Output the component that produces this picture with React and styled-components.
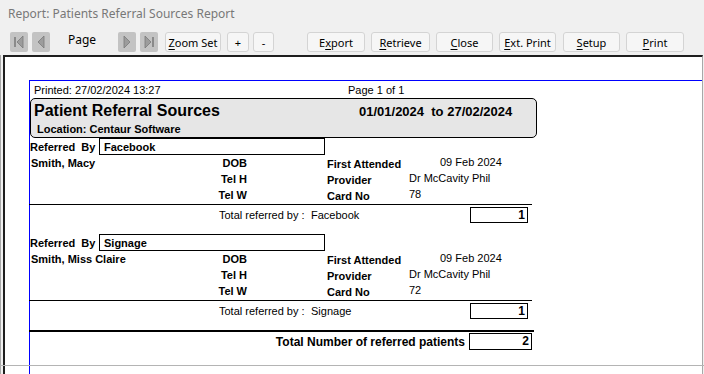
import React from 'react';
import styled, { createGlobalStyle } from 'styled-components';

const GlobalStyle = createGlobalStyle`
	html, body {
		margin: 0;
		padding: 0;
		background: #f0f0f0;
		overflow: hidden;
	}
`

const groups = [
	{
		source: 'Facebook',
		name: 'Smith, Macy',
		attended: '09 Feb 2024',
		provider: 'Dr McCavity Phil',
		card: '78',
		total: 1,
	},
	{
		source: 'Signage',
		name: 'Smith, Miss Claire',
		attended: '09 Feb 2024',
		provider: 'Dr McCavity Phil',
		card: '72',
		total: 1,
	},
]

const NavIcon = ({ dir, end }) => {
	const left = dir === 'left'
	return (
		<svg width="18" height="20" viewBox="0 0 18 20">
			<rect x="0" y="0" width="18" height="20" rx="2" fill="#c3c3c3" />
			{left ? (
				<>
					{end && <rect x="4" y="5" width="2" height="10" fill="#8a8a8a" />}
					<polygon points={end ? '13,4 7,10 13,16' : '12,4 6,10 12,16'} fill="#9c9c9c" stroke="#7a7a7a" strokeWidth="0.8" />
				</>
			) : (
				<>
					<polygon points={end ? '5,4 11,10 5,16' : '6,4 12,10 6,16'} fill="#9c9c9c" stroke="#7a7a7a" strokeWidth="0.8" />
					{end && <rect x="12" y="5" width="2" height="10" fill="#8a8a8a" />}
				</>
			)}
		</svg>
	)
}

const App = () => {
	return (
		<Window>
			<GlobalStyle />
			<TitleBar>Report: Patients Referral Sources Report</TitleBar>
			<Toolbar>
				<NavButton $ml={0}><NavIcon dir="left" end /></NavButton>
				<NavButton $ml={4}><NavIcon dir="left" /></NavButton>
				<PageLabel>Page</PageLabel>
				<NavButton $ml={0}><NavIcon dir="right" /></NavButton>
				<NavButton $ml={4}><NavIcon dir="right" end /></NavButton>
				<Button $ml={7} $w={56}><u>Z</u>oom Set</Button>
				<Button $ml={6} $w={22}>+</Button>
				<Button $ml={4} $w={21}>-</Button>
				<Button $ml={33} $w={58}>E<u>x</u>port</Button>
				<Button $ml={6} $w={59}><u>R</u>etrieve</Button>
				<Button $ml={6} $w={57}><u>C</u>lose</Button>
				<Button $ml={6} $w={57}><u>E</u>xt. Print</Button>
				<Button $ml={7} $w={57}><u>S</u>etup</Button>
				<Button $ml={6} $w={58}><u>P</u>rint</Button>
			</Toolbar>
			<Frame>
				<Viewport>
					<Page>
						<Content>
							<PrintedRow>
								<span>Printed: 27/02/2024 13:27</span>
								<span>Page 1 of 1</span>
							</PrintedRow>
							<HeaderBox>
								<HeaderTop>
									<ReportTitle>Patient Referral Sources</ReportTitle>
									<DateRange>01/01/2024  to 27/02/2024</DateRange>
								</HeaderTop>
								<Location>Location: Centaur Software</Location>
							</HeaderBox>
							{groups.map((g, index) => (
								<Group key={index}>
									<ReferredRow>
										<ReferredLabel>Referred  By</ReferredLabel>
										<SourceBox>{g.source}</SourceBox>
									</ReferredRow>
									<DetailRow>
										<Name>{g.name}</Name>
										<Label>DOB</Label>
										<Label2>First Attended</Label2>
										<Value $indent={31}>{g.attended}</Value>
									</DetailRow>
									<DetailRow>
										<Name />
										<Label>Tel H</Label>
										<Label2>Provider</Label2>
										<Value>{g.provider}</Value>
									</DetailRow>
									<DetailRow>
										<Name />
										<Label>Tel W</Label>
										<Label2>Card No</Label2>
										<Value>{g.card}</Value>
									</DetailRow>
									<Rule />
									<TotalRow>
										<span />
										<span>Total referred by :</span>
										<span>{g.source}</span>
										<span />
										<CountBox>{g.total}</CountBox>
									</TotalRow>
								</Group>
							))}
							<ThickRule />
							<GrandRow>
								<GrandLabel>Total Number of referred patients</GrandLabel>
								<GrandBox>2</GrandBox>
							</GrandRow>
						</Content>
					</Page>
				</Viewport>
				<PageBreak />
			</Frame>
		</Window>
	)
}

export default App

const Window = styled.div`
	width: 704px;
	height: 374px;
	background: #f0f0f0;
	display: flex;
	flex-direction: column;
	overflow: hidden;
`
const TitleBar = styled.div`
	height: 26px;
	padding: 0 0 2px 8px;
	display: flex;
	align-items: center;
	font-family: "Noto Sans", sans-serif;
	font-size: 12px;
	color: #787878;
`
const Toolbar = styled.div`
	height: 27px;
	box-sizing: border-box;
	padding: 4px 0 0 10px;
	display: flex;
	align-items: flex-start;
	font-family: "Noto Sans", sans-serif;
	font-size: 11px;
	color: #000;
`
const NavButton = styled.div`
	width: 18px;
	height: 20px;
	margin-left: ${p => p.$ml}px;
	display: flex;
`
const PageLabel = styled.div`
	width: 68px;
	box-sizing: border-box;
	padding-left: 18px;
	font-size: 12px;
	line-height: 16px;
`
const Button = styled.div`
	width: ${p => p.$w}px;
	height: 20px;
	margin-left: ${p => p.$ml}px;
	box-sizing: border-box;
	border: 1px solid #d4d4d4;
	border-radius: 3px;
	background: #f6f6f6;
	display: flex;
	align-items: center;
	justify-content: center;
	white-space: nowrap;
	u {
		text-decoration-thickness: 1px;
		text-underline-offset: 2px;
	}
`
const Frame = styled.div`
	flex: 1;
	position: relative;
	display: flex;
	border-left: 1px solid #a8a8a8;
	padding-left: 2px;
	padding-right: 1px;
	min-height: 0;
`
const Viewport = styled.div`
	flex: 1;
	background: #fff;
	border-top: 2px solid #1e1e1e;
	border-left: 2px solid #1e1e1e;
	border-right: 1px solid #a8a8a8;
	padding: 23px 0 0 24px;
	overflow: hidden;
	min-width: 0;
`
const PageBreak = styled.div`
	position: absolute;
	left: -1px;
	right: 0;
	top: 310px;
	height: 1px;
	background: #b4b4b4;
`
const Page = styled.div`
	width: 900px;
	height: 400px;
	border-top: 1px solid #0000ff;
	border-left: 1px solid #0000ff;
`
const Content = styled.div`
	width: 506px;
	display: flex;
	flex-direction: column;
	font-family: "Liberation Sans", Arial, sans-serif;
	font-size: 11px;
	color: #000;
`
const PrintedRow = styled.div`
	height: 17px;
	display: grid;
	grid-template-columns: 314px auto;
	padding-left: 4px;
	align-items: center;
	font-size: 11px;
`
const HeaderBox = styled.div`
	width: 507px;
	height: 40px;
	box-sizing: border-box;
	border: 1px solid #000;
	border-radius: 5px;
	background: #e6e6e6;
	display: flex;
	flex-direction: column;
`
const HeaderTop = styled.div`
	height: 22px;
	display: grid;
	grid-template-columns: 325px auto;
	align-items: center;
	padding-left: 3px;
	padding-top: 1px;
`
const ReportTitle = styled.div`
	font-size: 16px;
	font-weight: bold;
`
const DateRange = styled.div`
	font-size: 13px;
	font-weight: bold;
	white-space: pre;
	padding-top: 1px;
`
const Location = styled.div`
	padding-left: 6px;
	font-weight: bold;
	line-height: 14px;
`
const Group = styled.div`
	height: 96px;
	display: flex;
	flex-direction: column;
`
const ReferredRow = styled.div`
	height: 17px;
	display: flex;
	align-items: stretch;
`
const ReferredLabel = styled.div`
	width: 69px;
	font-weight: bold;
	white-space: pre;
	display: flex;
	align-items: center;
	padding-top: 1px;
`
const SourceBox = styled.div`
	width: 226px;
	box-sizing: border-box;
	border: 1px solid #000;
	padding-left: 4px;
	font-weight: bold;
	display: flex;
	align-items: center;
`
const DetailRow = styled.div`
	height: 16px;
	display: grid;
	grid-template-columns: 150px 67px 80px 82px auto;
	align-items: center;
	font-weight: bold;
`
const Name = styled.div`
	grid-column: 1;
	padding-left: 1px;
`
const Label = styled.div`
	grid-column: 2;
	text-align: right;
`
const Label2 = styled.div`
	grid-column: 4;
	padding-top: 2px;
`
const Value = styled.div`
	grid-column: 5;
	font-weight: normal;
	padding-left: ${p => p.$indent || 0}px;
	padding-bottom: 2px;
	white-space: nowrap;
`
const Rule = styled.div`
	width: 503px;
	height: 1px;
	margin: 1px 0 0 -1px;
	background: #000;
`
const TotalRow = styled.div`
	height: 16px;
	margin-top: 2px;
	display: grid;
	grid-template-columns: 189px 92px 159px 0 58px;
	align-items: center;
`
const CountBox = styled.div`
	height: 16px;
	box-sizing: border-box;
	border: 1px solid #000;
	text-align: right;
	padding-right: 2px;
	font-size: 12px;
	font-weight: bold;
	line-height: 14px;
`
const ThickRule = styled.div`
	width: 505px;
	height: 2px;
	margin-left: -1px;
	background: #000;
`
const GrandRow = styled.div`
	height: 17px;
	margin-top: 1px;
	display: flex;
	align-items: center;
`
const GrandLabel = styled.div`
	width: 435px;
	text-align: right;
	font-size: 12px;
	font-weight: bold;
	padding-top: 1px;
`
const GrandBox = styled.div`
	width: 63px;
	height: 17px;
	margin-left: 4px;
	box-sizing: border-box;
	border: 1px solid #000;
	text-align: right;
	padding-right: 2px;
	font-size: 12px;
	font-weight: bold;
	line-height: 15px;
`
